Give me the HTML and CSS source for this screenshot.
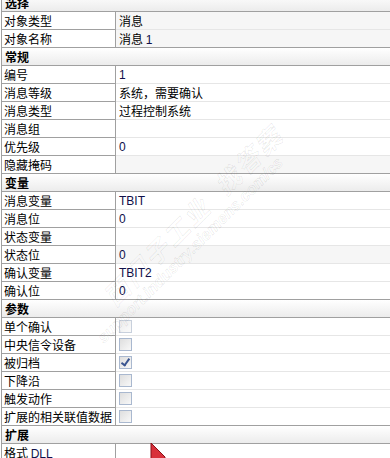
FILE: index.html
```html
<!DOCTYPE html>
<html lang="zh">
<head>
  <meta charset="UTF-8">
  <title>属性</title>
  <link rel="stylesheet" href="styles.css">
</head>
<body>
  <div class="grid">
    <div class="group">选择</div>
    <div class="row ro"><div class="name">对象类型</div><div class="val">消息</div></div>
    <div class="row ro"><div class="name">对象名称</div><div class="val">消息 <span class="num">1</span></div></div>

    <div class="group">常规</div>
    <div class="row"><div class="name">编号</div><div class="val num">1</div></div>
    <div class="row"><div class="name">消息等级</div><div class="val">系统，需要确认</div></div>
    <div class="row"><div class="name">消息类型</div><div class="val">过程控制系统</div></div>
    <div class="row"><div class="name">消息组</div><div class="val"></div></div>
    <div class="row"><div class="name">优先级</div><div class="val num">0</div></div>
    <div class="row ro"><div class="name">隐藏掩码</div><div class="val"></div></div>

    <div class="group">变量</div>
    <div class="row"><div class="name">消息变量</div><div class="val num">TBIT</div></div>
    <div class="row"><div class="name">消息位</div><div class="val num">0</div></div>
    <div class="row"><div class="name">状态变量</div><div class="val"></div></div>
    <div class="row ro"><div class="name">状态位</div><div class="val num">0</div></div>
    <div class="row"><div class="name">确认变量</div><div class="val num">TBIT2</div></div>
    <div class="row"><div class="name">确认位</div><div class="val num">0</div></div>

    <div class="group">参数</div>
    <div class="row"><div class="name">单个确认</div><div class="val"><span class="box off"></span></div></div>
    <div class="row"><div class="name">中央信令设备</div><div class="val"><span class="box"></span></div></div>
    <div class="row"><div class="name">被归档</div><div class="val"><span class="box checked"></span></div></div>
    <div class="row"><div class="name">下降沿</div><div class="val"><span class="box"></span></div></div>
    <div class="row"><div class="name">触发动作</div><div class="val"><span class="box"></span></div></div>
    <div class="row"><div class="name">扩展的相关联值数据</div><div class="val"><span class="box"></span></div></div>

    <div class="group">扩展</div>
    <div class="row"><div class="name">格式 <span class="num">DLL</span></div><div class="val"></div></div>
  </div>

  <!-- 水印 -->
  <div class="mark">
    <div class="mark-cn">西门子工业 &nbsp;找答案</div>
    <div class="mark-en">support.industry.siemens.com/cs</div>
  </div>

  <!-- 鼠标指针 -->
  <svg class="cursor" width="16" height="16" viewBox="0 0 16 16">
    <polygon points="1,0 15,14 15,16 1,16" fill="#d8303a" stroke="#8a1018" stroke-width="1"/>
  </svg>
</body>
</html>
```

FILE: styles.css
```css
body {
  margin: 0;
  background: #fff;
  font-family: "Noto Sans CJK SC", "Liberation Sans", sans-serif;
  font-size: 12px;
  color: #000;
  overflow: hidden;
  height: 458px;
  position: relative;
}
.grid {
  margin-top: -6px;
  margin-left: 1px;
  border-left: 1px solid #a0a0a0;
}
.group {
  height: 17px;
  line-height: 18px;
  padding-left: 3px;
  font-weight: bold;
  background: linear-gradient(#ffffff, #ececec);
  border-bottom: 1px solid #a0a0a0;
}
.row {
  display: grid;
  grid-template-columns: 114px 1fr;
  height: 18px;
}
.name {
  line-height: 18px;
  height: 17px;
  padding-left: 2px;
  background: #fff;
  border-right: 1px solid #a0a0a0;
  border-bottom: 1px solid #a0a0a0;
  white-space: nowrap;
  overflow: hidden;
}
.val {
  line-height: 18px;
  height: 17px;
  padding-left: 3px;
  border-bottom: 1px solid #e6e6e6;
  white-space: nowrap;
}
.row.ro .val {
  background: #f6f6f6;
}
.row:has(+ .group) .val {
  border-bottom-color: #a0a0a0;
}
.num {
  color: #10104a;
  font-family: "Liberation Sans", sans-serif;
}
.box {
  display: inline-block;
  vertical-align: top;
  margin-top: 2px;
  width: 11px;
  height: 11px;
  border: 1px solid #a9b8cf;
  background: linear-gradient(135deg, #dedede, #f8f8f8);
  position: relative;
}
.box.off {
  border-color: #c8d0dc;
  background: linear-gradient(135deg, #ececec, #fafafa);
}
.box.checked::after {
  content: "";
  position: absolute;
  left: 3px;
  top: 0;
  width: 3px;
  height: 7px;
  border-right: 2px solid #3a5590;
  border-bottom: 2px solid #3a5590;
  transform: rotate(35deg);
}
.mark {
  position: absolute;
  left: 97px;
  top: 290px;
  transform-origin: 0 0;
  transform: rotate(-45deg);
  pointer-events: none;
  color: transparent;
  -webkit-text-stroke: 0.6px rgba(0, 0, 0, 0.1);
  font-style: italic;
  font-weight: bold;
  white-space: nowrap;
}
.mark-cn {
  font-size: 25px;
  line-height: 28px;
  letter-spacing: 3px;
}
.mark-en {
  font-size: 16px;
  line-height: 19px;
  font-family: "Liberation Sans", sans-serif;
  margin-left: -33px;
}
.cursor {
  position: absolute;
  left: 150px;
  top: 443px;
}
```
